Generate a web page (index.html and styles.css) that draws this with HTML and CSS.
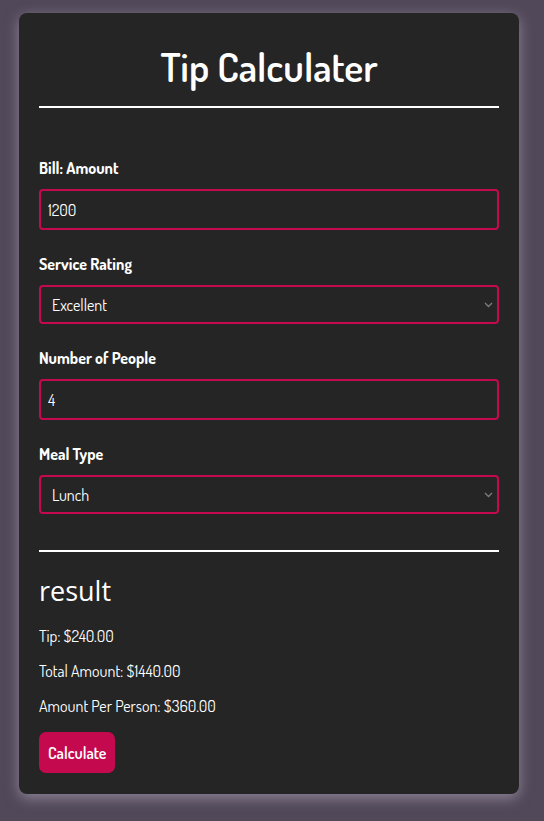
FILE: index.html
```html
<!DOCTYPE html>
<html>
<head>
<meta charset="utf-8">
<link rel="stylesheet" href="styles.css">
</head>
<body>
<div class="card">
  <h1 class="title">Tip Calculater</h1>
  <hr class="rule">
  <form class="form">
    <div class="group">
      <label class="label">Bill: Amount</label>
      <input class="field" type="text" value="1200">
    </div>
    <div class="group">
      <label class="label">Service Rating</label>
      <div class="select">
        <span>Excellent</span>
        <svg class="chev" width="9" height="6" viewBox="0 0 9 6"><path d="M1 1 L4.5 4.5 L8 1" fill="none" stroke="#7d7d7d" stroke-width="1.3"/></svg>
      </div>
    </div>
    <div class="group">
      <label class="label">Number of People</label>
      <input class="field" type="text" value="4">
    </div>
    <div class="group">
      <label class="label">Meal Type</label>
      <div class="select">
        <span>Lunch</span>
        <svg class="chev" width="9" height="6" viewBox="0 0 9 6"><path d="M1 1 L4.5 4.5 L8 1" fill="none" stroke="#7d7d7d" stroke-width="1.3"/></svg>
      </div>
    </div>
  </form>
  <hr class="rule rule2">
  <h2 class="result-title">result</h2>
  <p class="line">Tip: $240.00</p>
  <p class="line">Total Amount: $1440.00</p>
  <p class="line">Amount Per Person: $360.00</p>
  <button class="btn" type="button">Calculate</button>
</div>
</body>
</html>
```
FILE: styles.css
```css
html, body {
  margin: 0;
  padding: 0;
}
body {
  background: #514859;
  font-family: "Dosis", "Liberation Sans Narrow", "DejaVu Sans Condensed", sans-serif;
  color: #ffffff;
  padding: 13px 25px 27px 19px;
}
.card {
  background: #252525;
  border-radius: 8px;
  padding: 20px 20px 21px;
  box-shadow: 0 4px 14px rgba(190, 180, 200, 0.55);
}
.title {
  margin: 0;
  text-align: center;
  font-size: 40px;
  font-weight: 600;
  line-height: 48px;
  padding: 9px 0 16px;
}
.rule {
  border: 0;
  height: 2px;
  background: #ffffff;
  margin: 0;
}
.form {
  padding-top: 48px;
}
.group {
  display: flex;
  flex-direction: column;
  margin-bottom: 22px;
}
.label {
  font-size: 16px;
  font-weight: 700;
  line-height: 24px;
  margin-bottom: 9px;
}
.field {
  box-sizing: border-box;
  height: 41px;
  border: 2px solid #c5094f;
  border-radius: 4px;
  background: #252525;
  color: #ffffff;
  font-family: inherit;
  font-size: 16px;
  padding: 0 7px;
  outline: none;
}
.select {
  box-sizing: border-box;
  height: 39px;
  border: 2px solid #c5094f;
  border-radius: 4px;
  display: flex;
  align-items: center;
  justify-content: space-between;
  padding: 0 4px 0 11px;
  font-size: 16px;
}
.rule2 {
  margin-top: 36px;
}
.result-title {
  margin: 0;
  font-family: "Open Sans", "Noto Sans", sans-serif;
  font-size: 27px;
  font-weight: 400;
  line-height: 36px;
  padding: 21px 0 18px;
}
.line {
  margin: 0 0 16px;
  font-size: 16px;
  line-height: 19px;
}
.btn {
  display: block;
  background: #c5094f;
  color: #ffffff;
  border: 0;
  border-radius: 7px;
  height: 41px;
  padding: 0 9px;
  font-family: inherit;
  font-size: 16px;
  font-weight: 600;
  margin-top: 10px;
}
```
